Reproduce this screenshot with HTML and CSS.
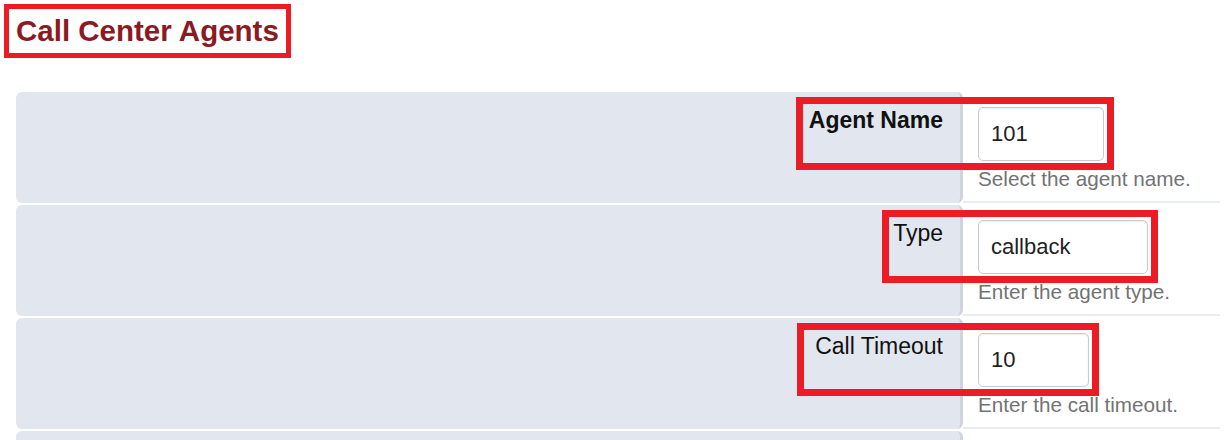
FILE: index.html
```html
<!DOCTYPE html>
<html lang="en">
<head>
    <meta charset="UTF-8">
    <meta name="viewport" content="width=device-width, initial-scale=1.0">
    <title>Call Center Agents</title>
    <link rel="stylesheet" href="styles.css">
</head>
<body>
    <h1 class="page-title">Call Center Agents</h1>
    <div class="form-table">
        <div class="form-row">
            <div class="label-cell"><label class="field-label strong">Agent Name</label></div>
            <div class="field-cell">
                <input class="text-input input-name" type="text" value="101">
                <p class="help">Select the agent name.</p>
            </div>
            <span class="callout callout-name"></span>
        </div>
        <div class="form-row">
            <div class="label-cell"><label class="field-label">Type</label></div>
            <div class="field-cell">
                <input class="text-input input-type" type="text" value="callback">
                <p class="help">Enter the agent type.</p>
            </div>
            <span class="callout callout-type"></span>
        </div>
        <div class="form-row">
            <div class="label-cell"><label class="field-label">Call Timeout</label></div>
            <div class="field-cell">
                <input class="text-input input-timeout" type="text" value="10">
                <p class="help">Enter the call timeout.</p>
            </div>
            <span class="callout callout-timeout"></span>
        </div>
        <div class="form-row">
            <div class="label-cell"></div>
            <div class="field-cell"></div>
        </div>
    </div>
</body>
</html>
```

FILE: styles.css
```css
body {
    margin: 0;
    font-family: "Liberation Sans", Arial, sans-serif;
    color: #222;
    background-color: #fff;
}

.page-title {
    display: inline-block;
    margin: 4px 0 0 4px;
    padding: 5px 7px 6px 7px;
    border: 5px solid #ec1c24;
    font-size: 29.5px;
    font-weight: bold;
    line-height: 33px;
    color: #8b1a22;
}

.form-table {
    width: 1204px;
    margin: 34px 0 0 16px;
}

.form-row {
    position: relative;
    display: grid;
    grid-template-columns: 947px 1fr;
    height: 111px;
    margin-bottom: 2px;
}

.label-cell {
    background-color: #e2e7ef;
    border-right: 3px solid #d0d5dd;
    border-radius: 6px;
    padding: 16px 17px 0 0;
    text-align: right;
}

.field-label {
    font-size: 23px;
    line-height: 24px;
    color: #111;
}

.strong {
    font-weight: bold;
}

.field-cell {
    padding: 15px 0 0 15px;
    border-bottom: 2px solid #e9edf2;
}

.text-input {
    display: block;
    box-sizing: border-box;
    height: 54px;
    padding: 0 12px;
    border: 1px solid #c6cbd1;
    border-radius: 5px;
    box-shadow: inset 0 1px 2px rgba(0, 0, 0, 0.08);
    font-family: inherit;
    font-size: 22px;
    color: #222;
    background-color: #fff;
}

.input-name {
    width: 126px;
}

.input-type {
    width: 170px;
}

.input-timeout {
    width: 111px;
}

.help {
    margin: 6px 0 0 0;
    font-size: 20.7px;
    line-height: 24px;
    color: #737373;
}

.callout {
    position: absolute;
    top: 5px;
    height: 73px;
    box-sizing: border-box;
    border: 7px solid #ec1c24;
}

.callout-name {
    left: 780px;
    width: 318px;
}

.callout-type {
    left: 866px;
    width: 276px;
}

.callout-timeout {
    left: 781px;
    width: 302px;
}
```
